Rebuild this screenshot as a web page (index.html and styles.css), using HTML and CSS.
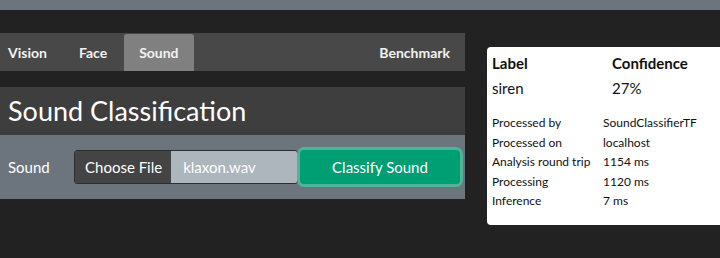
FILE: index.html
```html
<!DOCTYPE html>
<html lang="en">
<head>
  <meta charset="UTF-8" />
  <title>Sound Classification</title>
  <link rel="stylesheet" href="styles.css">
</head>
<body>
  <div class="topbar"></div>

  <div class="layout">
    <div class="main">
      <div class="tabs">
        <span class="tab first">Vision</span>
        <span class="tab">Face</span>
        <span class="tab active">Sound</span>
        <span class="tab right">Benchmark</span>
      </div>

      <h1 class="title">Sound Classification</h1>

      <div class="form-row">
        <label class="form-label">Sound</label>
        <div class="file-input">
          <span class="file-btn">Choose File</span>
          <span class="file-name">klaxon.wav</span>
        </div>
        <button class="classify">Classify Sound</button>
      </div>
    </div>

    <div class="result">
      <table class="result-top">
        <tr><th>Label</th><th>Confidence</th></tr>
        <tr><td>siren</td><td>27%</td></tr>
      </table>
      <table class="result-info">
        <tr><td>Processed by</td><td>SoundClassifierTF</td></tr>
        <tr><td>Processed on</td><td>localhost</td></tr>
        <tr><td>Analysis round trip</td><td>1154 ms</td></tr>
        <tr><td>Processing</td><td>1120 ms</td></tr>
        <tr><td>Inference</td><td>7 ms</td></tr>
      </table>
    </div>
  </div>
</body>
</html>
```

FILE: styles.css
```css
body {
  margin: 0;
  background: #222;
  font-family: Lato, 'Open Sans', sans-serif;
  color: #fff;
  overflow: hidden;
}
.topbar {
  height: 10px;
  background: #6c757d;
}
.layout {
  display: flex;
  align-items: flex-start;
}
.main {
  flex-shrink: 0;
  width: 465px;
  margin-top: 23px;
}
.tabs {
  display: flex;
  height: 38px;
  background: #484848;
}
.tab {
  display: flex;
  align-items: center;
  padding: 0 15px;
  font-size: 14px;
  font-weight: bold;
  color: #f2f2f2;
}
.tab.first {
  padding-left: 8px;
  margin-right: 2px;
}
.tab.active {
  background: #808080;
  border-radius: 3px 3px 0 0;
  margin-top: 1px;
  margin-left: 2px;
}
.tab.right {
  margin-left: auto;
}
.title {
  margin: 16px 0 0;
  height: 48px;
  background: #3e3e3e;
  font-size: 27px;
  font-weight: normal;
  line-height: 48px;
  padding-left: 8px;
}
.form-row {
  display: flex;
  align-items: center;
  height: 64px;
  background: #6c757d;
  padding-left: 8px;
}
.form-label {
  font-size: 15px;
  width: 66px;
}
.file-input {
  display: flex;
  height: 32px;
  width: 222px;
  border: 1px solid #2e2e2e;
  border-radius: 3px;
  overflow: hidden;
  font-size: 15px;
  white-space: nowrap;
}
.file-btn {
  display: flex;
  align-items: center;
  flex-shrink: 0;
  padding: 0 9px 0 10px;
  background: #444;
}
.file-name {
  display: flex;
  align-items: center;
  flex: 1;
  padding-left: 12px;
  background: #adb5bd;
}
.classify {
  margin-left: 2px;
  width: 160px;
  height: 34px;
  background: #009e73;
  color: #fff;
  font-family: Lato, sans-serif;
  font-size: 15px;
  border: none;
  border-radius: 4px;
  box-shadow: 0 0 0 3px #4fb397;
}
.result {
  flex-shrink: 0;
  margin: 37px 0 0 22px;
  width: 240px;
  background: #fff;
  color: #111;
  border-radius: 4px 0 0 4px;
  padding: 4px 0 14px 5px;
}
table {
  border-collapse: collapse;
}
.result-top th,
.result-top td {
  padding: 0;
  font-size: 15px;
  line-height: 24px;
  text-align: left;
}
.result-top th:first-child,
.result-top td:first-child {
  width: 120px;
}
.result-top td {
  line-height: 26px;
}
.result-info {
  margin-top: 12px;
}
.result-info td {
  padding: 0;
  font-size: 12px;
  line-height: 19.5px;
}
.result-info td:first-child {
  width: 111px;
}
```
